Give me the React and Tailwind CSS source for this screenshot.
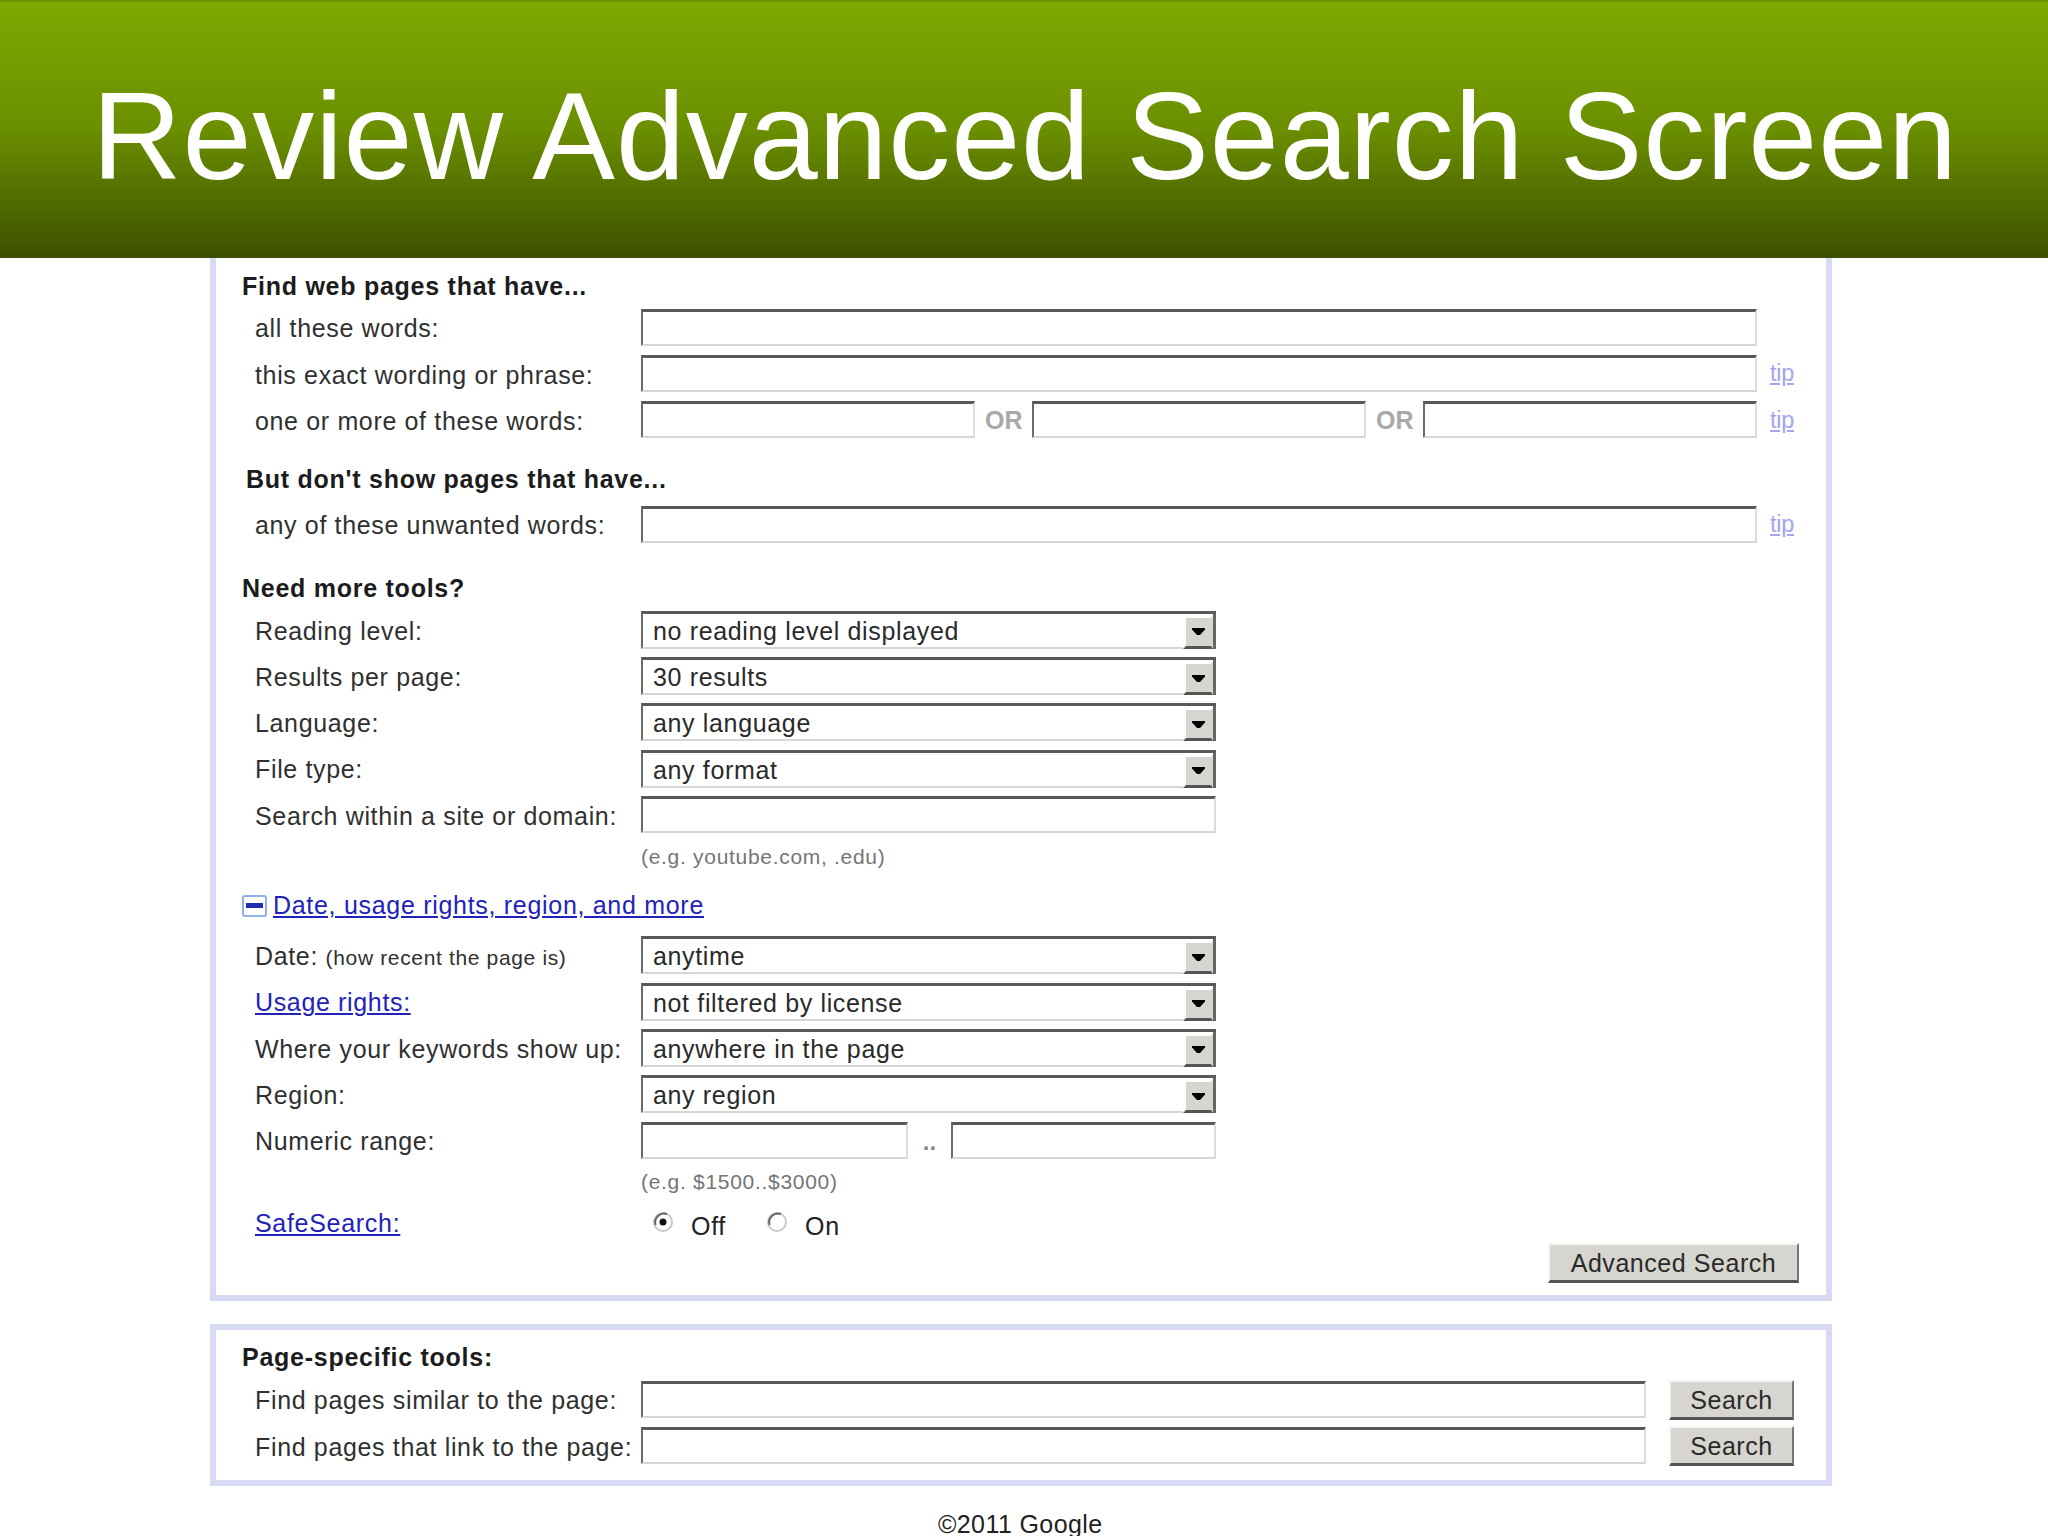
const FONT = "font-['Liberation_Sans',Arial,sans-serif]";

function TextBox({ className = "" }) {
  return (
    <input
      type="text"
      className={`h-[37px] mb-[4px] bg-white border-solid border-t-[3px] border-l-2 border-r-2 border-b-2 border-t-[#595959] border-l-[#6a6a6a] border-r-[#dcdcdc] border-b-[#d6d6d6] outline-none ${className}`}
    />
  );
}

function Select({ value }) {
  return (
    <div className="w-[575px] h-[38px] mb-[3px] flex items-stretch bg-white border-solid border-t-[3px] border-l-2 border-b-2 border-t-[#595959] border-l-[#6a6a6a] border-b-[#d6d6d6]">
      <span className="flex-1 pl-[10px] leading-[35px] text-[25px] tracking-[0.65px] text-[#2a2a2a]">{value}</span>
      <span className="w-[33px] flex items-stretch bg-white border-solid border-r-[3px] border-r-[#666666] -mb-[2px] pt-[2px]">
        <span className="w-full flex items-center justify-center bg-[#d6d5cf] border-solid border-t-2 border-l-[3px] border-r-2 border-t-white border-l-white border-r-[#d6d5cf] border-b-[3px] border-b-[#555555]">
          <svg width="13" height="7" viewBox="0 0 13 7">
            <path d="M0 0h13v1.5L8 7H5L0 1.5z" fill="#000000" />
          </svg>
        </span>
      </span>
    </div>
  );
}

function Row({ label, children }) {
  return (
    <div className="flex items-center h-[46.3px]">
      <div className="w-[425px] pl-[39px] shrink-0 text-[25px] tracking-[0.65px] text-[#303030] whitespace-nowrap">{label}</div>
      {children}
    </div>
  );
}

function Heading({ children, className = "" }) {
  return <div className={`pl-[26px] font-bold text-[25px] tracking-[0.74px] leading-[30px] text-[#1c1c1c] ${className}`}>{children}</div>;
}

function Tip() {
  return <a className="ml-[13px] mb-[3px] text-[23.5px] text-[#a5a5ec] underline tracking-[-0.3px]">tip</a>;
}

function Or() {
  return <span className="w-[57px] shrink-0 pl-[10px] mb-[2px] font-bold text-[25px] text-[#a9a9a9]">OR</span>;
}

function Hint({ children, className = "" }) {
  return <div className={`pl-[425px] text-[21px] tracking-[0.7px] text-[#757575] ${className}`}>{children}</div>;
}

function GreyButton({ children, className = "" }) {
  return (
    <button className={`bg-[#d6d5cf] border-solid border-t-2 border-l-2 border-r-2 border-b-[3px] border-t-[#f4f4f2] border-l-[#f4f4f2] border-r-[#777777] border-b-[#555555] text-[25px] tracking-[0.55px] text-[#2a2a2a] ${className}`}>
      {children}
    </button>
  );
}

function Radio({ on }) {
  return (
    <svg width="22" height="22" viewBox="0 0 22 22" className="shrink-0 mt-[6px]">
      <circle cx="11" cy="11" r="9" fill="#ffffff" stroke="#c9c9c9" strokeWidth="2" />
      <path d="M3.5 14A9 9 0 0 1 15 3" fill="none" stroke="#666666" strokeWidth="2" />
      {on && <circle cx="11" cy="11" r="3.5" fill="#111111" />}
    </svg>
  );
}

const linkCls = "text-[#2222bb] underline";

export default function App() {
  return (
    <div className={`${FONT} w-[2048px] h-[1536px] bg-white overflow-hidden`}>
      <header className="h-[258px] pl-[92px] bg-gradient-to-b from-[#7fa800] via-[#6a8f00] to-[#3e5000] flex items-start border-t-2 border-t-[#6f9400]">
        <h1 className="text-[124px] leading-[132px] mt-[68px] text-white whitespace-nowrap tracking-[0.88px]">Review Advanced Search Screen</h1>
      </header>

      <div className="ml-[210px] w-[1622px]">
        <section className="h-[1043px] border-solid border-l-[6px] border-r-[6px] border-b-[6px] border-[#d7daf2] pt-[13px]">
          <Heading>Find web pages that have...</Heading>
          <div className="mt-[5px]">
            <Row label="all these words:"><TextBox className="w-[1116px]" /></Row>
            <Row label="this exact wording or phrase:"><TextBox className="w-[1116px]" /><Tip /></Row>
            <Row label="one or more of these words:">
              <TextBox className="w-[334px]" /><Or /><TextBox className="w-[334px]" /><Or /><TextBox className="w-[334px]" /><Tip />
            </Row>
          </div>
          <Heading className="pl-[30px] mt-[19px]">But don't show pages that have...</Heading>
          <div className="mt-[9px]">
            <Row label="any of these unwanted words:"><TextBox className="w-[1116px]" /><Tip /></Row>
          </div>
          <Heading className="mt-[24px]">Need more tools?</Heading>
          <div className="mt-[5px]">
            <Row label="Reading level:"><Select value="no reading level displayed" /></Row>
            <Row label="Results per page:"><Select value="30 results" /></Row>
            <Row label="Language:"><Select value="any language" /></Row>
            <Row label="File type:"><Select value="any format" /></Row>
            <Row label="Search within a site or domain:"><TextBox className="w-[575px]" /></Row>
          </div>
          <Hint className="mt-[3px] leading-[28px]">(e.g. youtube.com, .edu)</Hint>
          <div className="mt-[21px] pl-[26px] flex items-center h-[28px]">
            <span className="w-[25px] h-[22px] flex items-center justify-center rounded-[3px] border-2 border-solid border-[#8fb0e8] bg-white">
              <span className="w-[17px] h-[5px] bg-[#1f2fb0]" />
            </span>
            <a className={`ml-[6px] text-[25px] tracking-[0.7px] ${linkCls}`}>Date, usage rights, region, and more</a>
          </div>
          <div className="mt-[14px]">
            <Row label={<>Date: <span className="text-[21px] tracking-[0.65px]">(how recent the page is)</span></>}><Select value="anytime" /></Row>
            <Row label={<a className={linkCls}>Usage rights:</a>}><Select value="not filtered by license" /></Row>
            <Row label="Where your keywords show up:"><Select value="anywhere in the page" /></Row>
            <Row label="Region:"><Select value="any region" /></Row>
            <Row label="Numeric range:">
              <TextBox className="w-[267px]" />
              <span className="w-[43px] text-center font-bold text-[24px] text-[#888888] leading-[44px]">..</span>
              <TextBox className="w-[265px]" />
            </Row>
          </div>
          <Hint className="mt-[3px] leading-[28px]">(e.g. $1500..$3000)</Hint>
          <div className="mt-[9px] flex items-start h-[38px]">
            <div className="w-[425px] pl-[39px] text-[25px] tracking-[0.7px]"><a className={linkCls}>SafeSearch:</a></div>
            <div className="flex items-start text-[25px] tracking-[0.7px] text-[#222222]">
              <span className="ml-[11px]"><Radio on /></span>
              <span className="ml-[17px] mt-[3px]">Off</span>
              <span className="ml-[40px]"><Radio /></span>
              <span className="ml-[17px] mt-[3px]">On</span>
            </div>
          </div>
          <div className="flex justify-end pr-[27px]">
            <GreyButton className="w-[251px] h-[40px]">Advanced Search</GreyButton>
          </div>
        </section>

        <section className="mt-[23px] h-[162px] border-solid border-[6px] border-[#d7daf2] pt-[12px]">
          <Heading>Page-specific tools:</Heading>
          <div className="mt-[6px]">
            <Row label="Find pages similar to the page:">
              <TextBox className="w-[1005px]" />
              <GreyButton className="ml-[23px] w-[125px] h-[40px] mb-[3px]">Search</GreyButton>
            </Row>
            <Row label="Find pages that link to the page:">
              <TextBox className="w-[1005px]" />
              <GreyButton className="ml-[23px] w-[125px] h-[40px] mb-[3px]">Search</GreyButton>
            </Row>
          </div>
        </section>

        <footer className="mt-[24px] pl-[728px] text-[25px] tracking-[0.4px] leading-[28px] text-[#222222]">©2011 Google</footer>
      </div>
    </div>
  );
}
